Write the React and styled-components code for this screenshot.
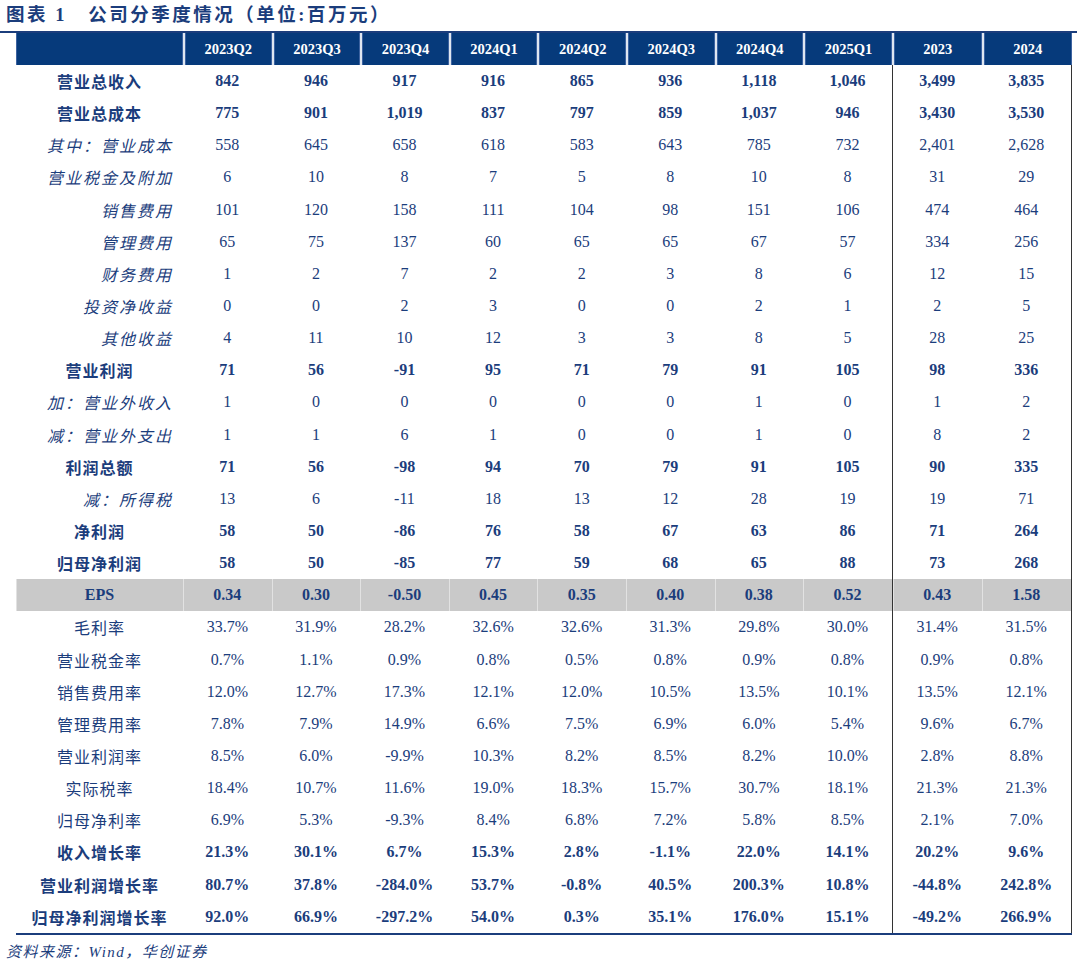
import React from 'react';
import styled, { createGlobalStyle } from 'styled-components';

const Global = createGlobalStyle`
  body { margin: 0; background: #fff; }
`;

const NAVY = '#1b3d7c';
const cols = ['2023Q2','2023Q3','2023Q4','2024Q1','2024Q2','2024Q3','2024Q4','2025Q1','2023','2024'];

// [label, kind, values] kind: b=bold, n=normal, i=italic, e=eps
const rows = [
  ['营业总收入','b',['842','946','917','916','865','936','1,118','1,046','3,499','3,835']],
  ['营业总成本','b',['775','901','1,019','837','797','859','1,037','946','3,430','3,530']],
  ['其中：营业成本','i',['558','645','658','618','583','643','785','732','2,401','2,628']],
  ['营业税金及附加','i',['6','10','8','7','5','8','10','8','31','29']],
  ['销售费用','i',['101','120','158','111','104','98','151','106','474','464']],
  ['管理费用','i',['65','75','137','60','65','65','67','57','334','256']],
  ['财务费用','i',['1','2','7','2','2','3','8','6','12','15']],
  ['投资净收益','i',['0','0','2','3','0','0','2','1','2','5']],
  ['其他收益','i',['4','11','10','12','3','3','8','5','28','25']],
  ['营业利润','b',['71','56','-91','95','71','79','91','105','98','336']],
  ['加：营业外收入','i',['1','0','0','0','0','0','1','0','1','2']],
  ['减：营业外支出','i',['1','1','6','1','0','0','1','0','8','2']],
  ['利润总额','b',['71','56','-98','94','70','79','91','105','90','335']],
  ['减：所得税','i',['13','6','-11','18','13','12','28','19','19','71']],
  ['净利润','b',['58','50','-86','76','58','67','63','86','71','264']],
  ['归母净利润','b',['58','50','-85','77','59','68','65','88','73','268']],
  ['EPS','e',['0.34','0.30','-0.50','0.45','0.35','0.40','0.38','0.52','0.43','1.58']],
  ['毛利率','n',['33.7%','31.9%','28.2%','32.6%','32.6%','31.3%','29.8%','30.0%','31.4%','31.5%']],
  ['营业税金率','n',['0.7%','1.1%','0.9%','0.8%','0.5%','0.8%','0.9%','0.8%','0.9%','0.8%']],
  ['销售费用率','n',['12.0%','12.7%','17.3%','12.1%','12.0%','10.5%','13.5%','10.1%','13.5%','12.1%']],
  ['管理费用率','n',['7.8%','7.9%','14.9%','6.6%','7.5%','6.9%','6.0%','5.4%','9.6%','6.7%']],
  ['营业利润率','n',['8.5%','6.0%','-9.9%','10.3%','8.2%','8.5%','8.2%','10.0%','2.8%','8.8%']],
  ['实际税率','n',['18.4%','10.7%','11.6%','19.0%','18.3%','15.7%','30.7%','18.1%','21.3%','21.3%']],
  ['归母净利率','n',['6.9%','5.3%','-9.3%','8.4%','6.8%','7.2%','5.8%','8.5%','2.1%','7.0%']],
  ['收入增长率','b',['21.3%','30.1%','6.7%','15.3%','2.8%','-1.1%','22.0%','14.1%','20.2%','9.6%']],
  ['营业利润增长率','b',['80.7%','37.8%','-284.0%','53.7%','-0.8%','40.5%','200.3%','10.8%','-44.8%','242.8%']],
  ['归母净利润增长率','b',['92.0%','66.9%','-297.2%','54.0%','0.3%','35.1%','176.0%','15.1%','-49.2%','266.9%']],
];

const Page = styled.div`
  width: 1077px;
  height: 967px;
  font-family: "Liberation Serif", "Noto Sans CJK SC", serif;
  color: ${NAVY};
`;

const Title = styled.div`
  height: 31px;
  padding-left: 6px;
  font-size: 18.5px;
  font-weight: bold;
  line-height: 31px;
  border-bottom: 2px solid ${NAVY};
  letter-spacing: 2.5px;
`;

const Table = styled.div`
  margin-left: 16px;
  width: 1056px;
  display: grid;
  grid-template-columns: 167px repeat(8, 88.6px) repeat(2, 90px);
`;

const Head = styled.div`
  height: 32px;
  background: #063a7b;
  color: #fff;
  font-weight: bold;
  font-size: 14.5px;
  display: flex;
  align-items: center;
  justify-content: center;
  border-left: ${p => (p.$first ? 'none' : '2px solid #dfe6f0')};
  box-shadow: inset 10px 0 0 -9px #3d63a0, inset -10px 0 0 -9px #3d63a0;
`;

const Cell = styled.div`
  height: 32.15px;
  display: flex;
  align-items: center;
  justify-content: center;
  font-size: 16px;
  font-weight: ${p => (p.$kind === 'b' || p.$kind === 'e' ? 'bold' : 'normal')};
  background: ${p => (p.$kind === 'e' ? '#c9c9c9' : 'transparent')};
  border-left: ${p => (p.$split ? '1.5px solid #333' : 'none')};
  border-right: ${p => (p.$end ? '1.5px solid #333' : 'none')};
  box-shadow: ${p => (p.$kind === 'e' ? 'inset 1px 0 0 #e2e2e2' : 'none')};
`;

const Label = styled(Cell)`
  font-family: "Noto Sans CJK SC", serif;
  font-size: 16px;
  font-style: ${p => (p.$kind === 'i' ? 'italic' : 'normal')};
  justify-content: ${p => (p.$kind === 'i' ? 'flex-end' : 'center')};
  padding-right: ${p => (p.$kind === 'i' ? '10px' : '0')};
  font-weight: ${p => (p.$kind === 'b' ? 'bold' : 'normal')};
  letter-spacing: ${p => (p.$kind === 'i' ? '2px' : '1px')};
  & span.eps { font-family: "Liberation Serif", serif; font-size: 16px; font-weight: bold; letter-spacing: 0; }
`;

const Rule = styled.div`
  margin-left: 16px;
  width: 1056px;
  border-top: 2px solid ${NAVY};
`;

const Source = styled.div`
  padding: 5px 0 0 6px;
  font-size: 15px;
  font-style: italic;
  letter-spacing: 1.5px;
`;

export default function App() {
  return (
    <Page>
      <Global />
      <Title>图表 1&nbsp;&nbsp;&nbsp;公司分季度情况（单位:百万元）</Title>
      <Table>
        <Head $first />
        {cols.map(c => <Head key={c}>{c}</Head>)}
        {rows.map(([label, kind, vals]) => (
          <React.Fragment key={label}>
            <Label $kind={kind}>{kind === 'e' ? <span className="eps">EPS</span> : label}</Label>
            {vals.map((v, i) => (
              <Cell key={i} $kind={kind} $split={i === 8} $end={i === 9}>{v}</Cell>
            ))}
          </React.Fragment>
        ))}
      </Table>
      <Rule />
      <Source>资料来源：Wind，华创证券</Source>
    </Page>
  );
}
